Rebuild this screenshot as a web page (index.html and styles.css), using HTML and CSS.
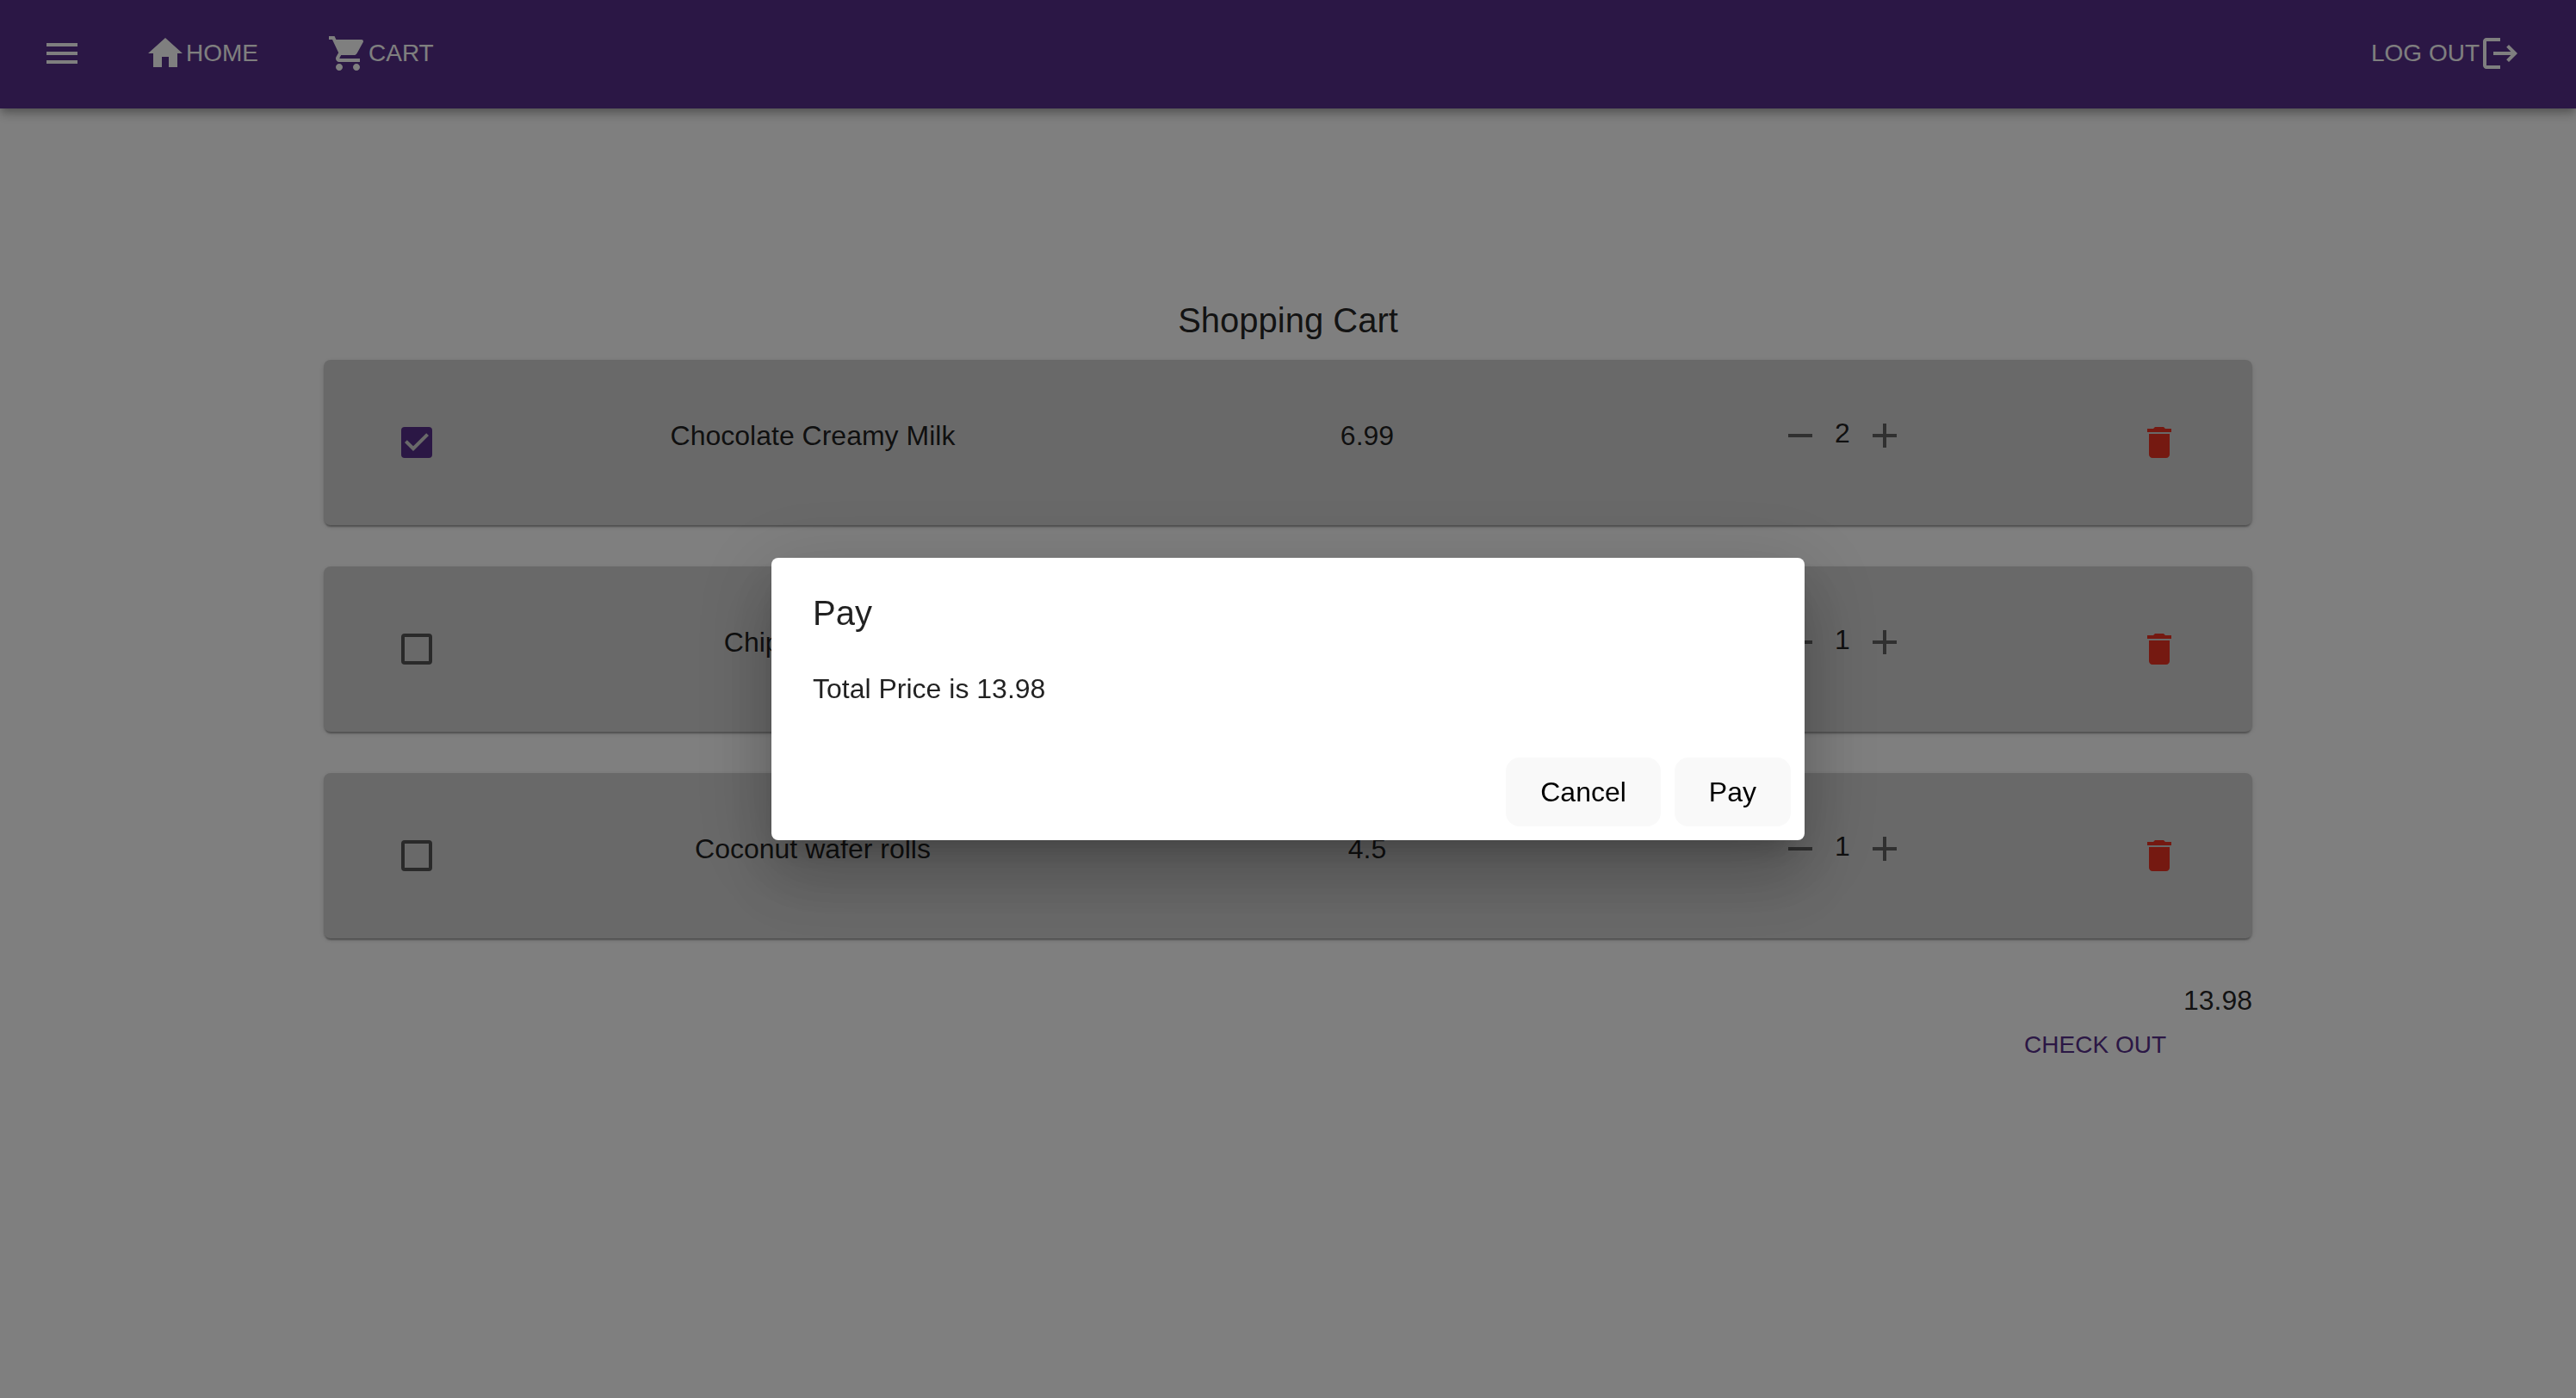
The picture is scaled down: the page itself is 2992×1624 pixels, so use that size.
FILE: index.html
```html
<!DOCTYPE html>
<html lang="en">
<head>
<meta charset="utf-8">
<meta name="viewport" content="width=device-width, initial-scale=1">
<title>Shopping Cart</title>
<link rel="stylesheet" href="styles.css">
</head>
<body>
<svg class="sprite" aria-hidden="true">
  <symbol id="icon-menu" viewBox="0 0 24 24"><path d="M3 18h18v-2H3v2zm0-5h18v-2H3v2zm0-7v2h18V6H3z"/></symbol>
  <symbol id="icon-home" viewBox="0 0 24 24"><path d="M10 20v-6h4v6h5v-8h3L12 3 2 12h3v8z"/></symbol>
  <symbol id="icon-cart" viewBox="0 0 24 24"><path d="M7 18c-1.1 0-1.99.9-1.99 2S5.9 22 7 22s2-.9 2-2-.9-2-2-2zM1 2v2h2l3.6 7.59-1.35 2.45c-.16.28-.25.61-.25.96 0 1.1.9 2 2 2h12v-2H7.42c-.14 0-.25-.11-.25-.25l.03-.12.9-1.63h7.45c.75 0 1.41-.41 1.75-1.03l3.58-6.49c.08-.14.12-.31.12-.48 0-.55-.45-1-1-1H5.21l-.94-2H1zm16 16c-1.1 0-1.99.9-1.99 2s.89 2 1.99 2 2-.9 2-2-.9-2-2-2z"/></symbol>
  <symbol id="icon-logout" viewBox="0 0 24 24"><path d="m17 7-1.41 1.41L18.17 11H8v2h10.17l-2.58 2.58L17 17l5-5zM4 5h8V3H4c-1.1 0-2 .9-2 2v14c0 1.1.9 2 2 2h8v-2H4V5z"/></symbol>
  <symbol id="icon-minus" viewBox="0 0 24 24"><path d="M19 13H5v-2h14v2z"/></symbol>
  <symbol id="icon-plus" viewBox="0 0 24 24"><path d="M19 13h-6v6h-2v-6H5v-2h6V5h2v6h6v2z"/></symbol>
  <symbol id="icon-delete" viewBox="0 0 24 24"><path d="M6 19c0 1.1.9 2 2 2h8c1.1 0 2-.9 2-2V7H6v12zM19 4h-3.5l-1-1h-5l-1 1H5v2h14V4z"/></symbol>
</svg>

<header class="app-bar">
  <button class="menu-button" type="button" aria-label="Menu"><svg class="icon"><use href="#icon-menu"/></svg></button>
  <nav class="nav">
    <a class="nav-link" href="#home"><svg class="icon"><use href="#icon-home"/></svg>HOME</a>
    <a class="nav-link" href="#cart"><svg class="icon"><use href="#icon-cart"/></svg>CART</a>
  </nav>
  <button class="nav-link logout" type="button">LOG OUT<svg class="icon"><use href="#icon-logout"/></svg></button>
</header>

<main class="cart">
  <h1 class="cart-title">Shopping Cart</h1>
  <ul class="cart-list">
    <li class="card">
      <input class="checkbox" type="checkbox" aria-labelledby="item-1" checked>
      <span class="cell" id="item-1">Chocolate Creamy Milk</span>
      <span class="cell">6.99</span>
      <div class="quantity">
        <button class="icon-button" type="button" aria-label="Decrease"><svg class="icon"><use href="#icon-minus"/></svg></button>
        <span class="count">2</span>
        <button class="icon-button" type="button" aria-label="Increase"><svg class="icon"><use href="#icon-plus"/></svg></button>
      </div>
      <button class="icon-button delete" type="button" aria-label="Delete"><svg class="icon"><use href="#icon-delete"/></svg></button>
    </li>
    <li class="card">
      <input class="checkbox" type="checkbox" aria-labelledby="item-2">
      <span class="cell" id="item-2">Chips Cookies</span>
      <span class="cell"></span>
      <div class="quantity">
        <button class="icon-button" type="button" aria-label="Decrease"><svg class="icon"><use href="#icon-minus"/></svg></button>
        <span class="count">1</span>
        <button class="icon-button" type="button" aria-label="Increase"><svg class="icon"><use href="#icon-plus"/></svg></button>
      </div>
      <button class="icon-button delete" type="button" aria-label="Delete"><svg class="icon"><use href="#icon-delete"/></svg></button>
    </li>
    <li class="card">
      <input class="checkbox" type="checkbox" aria-labelledby="item-3">
      <span class="cell" id="item-3">Coconut wafer rolls</span>
      <span class="cell">4.5</span>
      <div class="quantity">
        <button class="icon-button" type="button" aria-label="Decrease"><svg class="icon"><use href="#icon-minus"/></svg></button>
        <span class="count">1</span>
        <button class="icon-button" type="button" aria-label="Increase"><svg class="icon"><use href="#icon-plus"/></svg></button>
      </div>
      <button class="icon-button delete" type="button" aria-label="Delete"><svg class="icon"><use href="#icon-delete"/></svg></button>
    </li>
  </ul>
  <div class="summary">
    <span class="total">13.98</span>
    <button class="checkout" type="button">CHECK OUT</button>
  </div>
</main>

<div class="backdrop">
  <section class="dialog" role="dialog" aria-modal="true" aria-labelledby="dialog-title">
    <h2 class="dialog-title" id="dialog-title">Pay</h2>
    <p class="dialog-text">Total Price is 13.98</p>
    <div class="dialog-actions">
      <button class="button" type="button">Cancel</button>
      <button class="button" type="button">Pay</button>
    </div>
  </section>
</div>
</body>
</html>
```

FILE: styles.css
```css
:root {
  --purple: #562e8a;
  --text: rgba(0, 0, 0, 0.87);
}

* {
  box-sizing: border-box;
}

body {
  margin: 0;
  min-height: 100vh;
  background: #fff;
  color: var(--text);
  font-family: "Liberation Sans", Arial, Helvetica, sans-serif;
  font-size: 32px;
  line-height: 48px;
}

button {
  margin: 0;
  padding: 0;
  border: 0;
  background: none;
  color: inherit;
  font: inherit;
  cursor: pointer;
}

.sprite {
  display: none;
}

.icon {
  display: block;
  flex: none;
  width: 48px;
  height: 48px;
  fill: currentColor;
}

/* App bar */

.app-bar {
  display: flex;
  align-items: center;
  padding: 14px 48px 16px 24px;
  background: var(--purple);
  color: #fff;
  box-shadow:
    0 4px 8px -2px rgba(0, 0, 0, 0.2),
    0 8px 10px 0 rgba(0, 0, 0, 0.14),
    0 2px 20px 0 rgba(0, 0, 0, 0.12);
}

.menu-button {
  padding: 24px;
}

.nav {
  display: flex;
  gap: 48px;
  margin-left: 32px;
}

.nav-link {
  display: flex;
  align-items: center;
  padding: 0 16px;
  color: inherit;
  font-size: 28px;
  text-decoration: none;
}

.logout {
  margin-left: auto;
}

/* Cart */

.cart {
  width: 75%;
  max-width: 2240px;
  margin: 0 auto;
  padding: 214px 0 48px;
}

.cart-title {
  margin: 0 0 14px;
  font-size: 40px;
  font-weight: 400;
  line-height: 64px;
  text-align: center;
}

.cart-list {
  display: flex;
  flex-direction: column;
  gap: 48px;
  margin: 0;
  padding: 0;
  list-style: none;
}

.card {
  display: grid;
  grid-template-columns: 27fr 88fr 73fr 65fr 27fr;
  grid-auto-rows: 64px;
  align-items: start;
  justify-items: center;
  padding: 64px 0;
  border-radius: 8px;
  background: #d3d3d3;
  box-shadow:
    0 4px 2px -2px rgba(0, 0, 0, 0.2),
    0 2px 2px 0 rgba(0, 0, 0, 0.14),
    0 2px 6px 0 rgba(0, 0, 0, 0.12);
}

.checkbox {
  appearance: none;
  align-self: center;
  width: 36px;
  height: 36px;
  margin: 0;
  border: 4px solid rgba(0, 0, 0, 0.6);
  border-radius: 4px;
}

.checkbox:checked {
  border: 0;
  background: var(--purple) url("data:image/svg+xml,%3Csvg xmlns='http://www.w3.org/2000/svg' viewBox='3 3 18 18'%3E%3Cpath fill='%23d3d3d3' d='M10 17l-5-5 1.41-1.41L10 14.17l7.59-7.59L19 8l-9 9z'/%3E%3C/svg%3E") center / 100% no-repeat;
}

.quantity {
  display: flex;
  align-items: flex-start;
  gap: 16px;
}

.count {
  line-height: 42px;
}

.icon-button {
  color: rgba(0, 0, 0, 0.54);
}

.delete {
  align-self: center;
  color: #ea3323;
}

.summary {
  display: flex;
  flex-direction: column;
  align-items: flex-end;
  padding-top: 48px;
}

.checkout {
  padding: 0 100px;
  color: var(--purple);
  font-size: 28px;
  line-height: 56px;
}

/* Dialog */

.backdrop {
  position: fixed;
  inset: 0;
  display: flex;
  align-items: center;
  justify-content: center;
  background: rgba(0, 0, 0, 0.5);
}

.dialog {
  width: 100%;
  max-width: 1200px;
  border-radius: 8px;
  background: #fff;
  box-shadow:
    0 22px 30px -14px rgba(0, 0, 0, 0.2),
    0 48px 76px 6px rgba(0, 0, 0, 0.14),
    0 18px 92px 16px rgba(0, 0, 0, 0.12);
}

.dialog-title {
  margin: 0;
  padding: 32px 48px;
  font-size: 40px;
  font-weight: 400;
  line-height: 64px;
}

.dialog-text {
  margin: 0;
  padding: 0 48px 40px;
}

.dialog-actions {
  display: flex;
  justify-content: flex-end;
  gap: 16px;
  padding: 16px;
}

.button {
  padding: 16px 40px;
  border-radius: 16px;
  background: #f9f9f9;
  color: #000;
}
```
